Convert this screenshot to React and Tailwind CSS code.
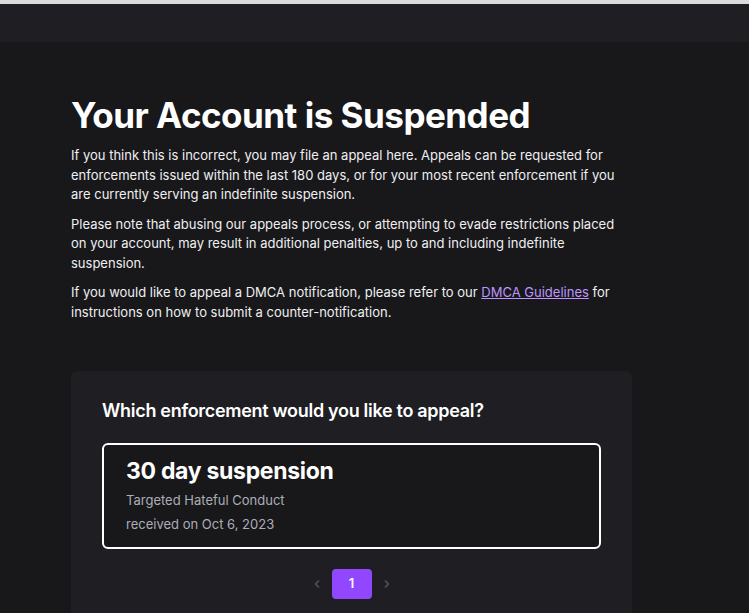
import React from "react";

function Chevron({ dir }) {
  return (
    <svg width="10" height="10" viewBox="0 0 10 10" fill="none">
      <path
        d={dir === "left" ? "M6.5 2 L3.5 5 L6.5 8" : "M3.5 2 L6.5 5 L3.5 8"}
        stroke="currentColor"
        strokeWidth="1.6"
        strokeLinecap="round"
        strokeLinejoin="round"
      />
    </svg>
  );
}

export default function App() {
  return (
    <div className="h-[613px] overflow-hidden bg-[#18181b] font-['Inter',sans-serif] text-[#efeff1]">
      <div className="h-1 bg-[#dcdcdc]" />
      <div className="h-[38px] bg-[#1f1f23]" />

      <main className="ml-[71px] w-[561px] pt-[51px]">
        <h1 className="text-[35px] font-bold leading-[44px] tracking-[-0.5px] text-white">
          Your Account is Suspended
        </h1>

        <div className="mt-[9px] flex flex-col gap-[10px] text-[13px] leading-[19.5px] text-[#efeff1]">
          <p>
            If you think this is incorrect, you may file an appeal here. Appeals can be requested for
            enforcements issued within the last 180 days, or for your most recent enforcement if you
            are currently serving an indefinite suspension.
          </p>
          <p>
            Please note that abusing our appeals process, or attempting to evade restrictions placed
            on your account, may result in additional penalties, up to and including indefinite
            suspension.
          </p>
          <p>
            If you would like to appeal a DMCA notification, please refer to our{" "}
            <a href="#" className="text-[#bf94ff] underline">
              DMCA Guidelines
            </a>{" "}
            for instructions on how to submit a counter-notification.
          </p>
        </div>

        <section className="mt-[49px] rounded-md bg-[#1f1f23] px-[31px] pb-10 pt-[28px]">
          <h2 className="text-[18px] font-semibold leading-6 tracking-[-0.3px] text-white">
            Which enforcement would you like to appeal?
          </h2>

          <div className="mt-[20px] rounded-md border-2 border-white bg-[#18181b] px-[22px] pb-[11px] pt-[11px]">
            <div className="text-[23px] font-bold leading-[30px] tracking-[-0.3px] text-white">
              30 day suspension
            </div>
            <div className="mt-[2px] text-[13px] leading-6 text-[#adadb8]">Targeted Hateful Conduct</div>
            <div className="text-[13px] leading-6 text-[#adadb8]">received on Oct 6, 2023</div>
          </div>

          <div className="mt-[20px] flex items-center justify-center gap-[5px]">
            <button className="flex h-[30px] w-[20px] items-center justify-center text-[#53535f]">
              <Chevron dir="left" />
            </button>
            <button className="flex h-[30px] w-10 items-center justify-center rounded bg-[#9147ff] text-[13px] font-semibold text-white">
              1
            </button>
            <button className="flex h-[30px] w-[20px] items-center justify-center text-[#53535f]">
              <Chevron dir="right" />
            </button>
          </div>
        </section>
      </main>
    </div>
  );
}
